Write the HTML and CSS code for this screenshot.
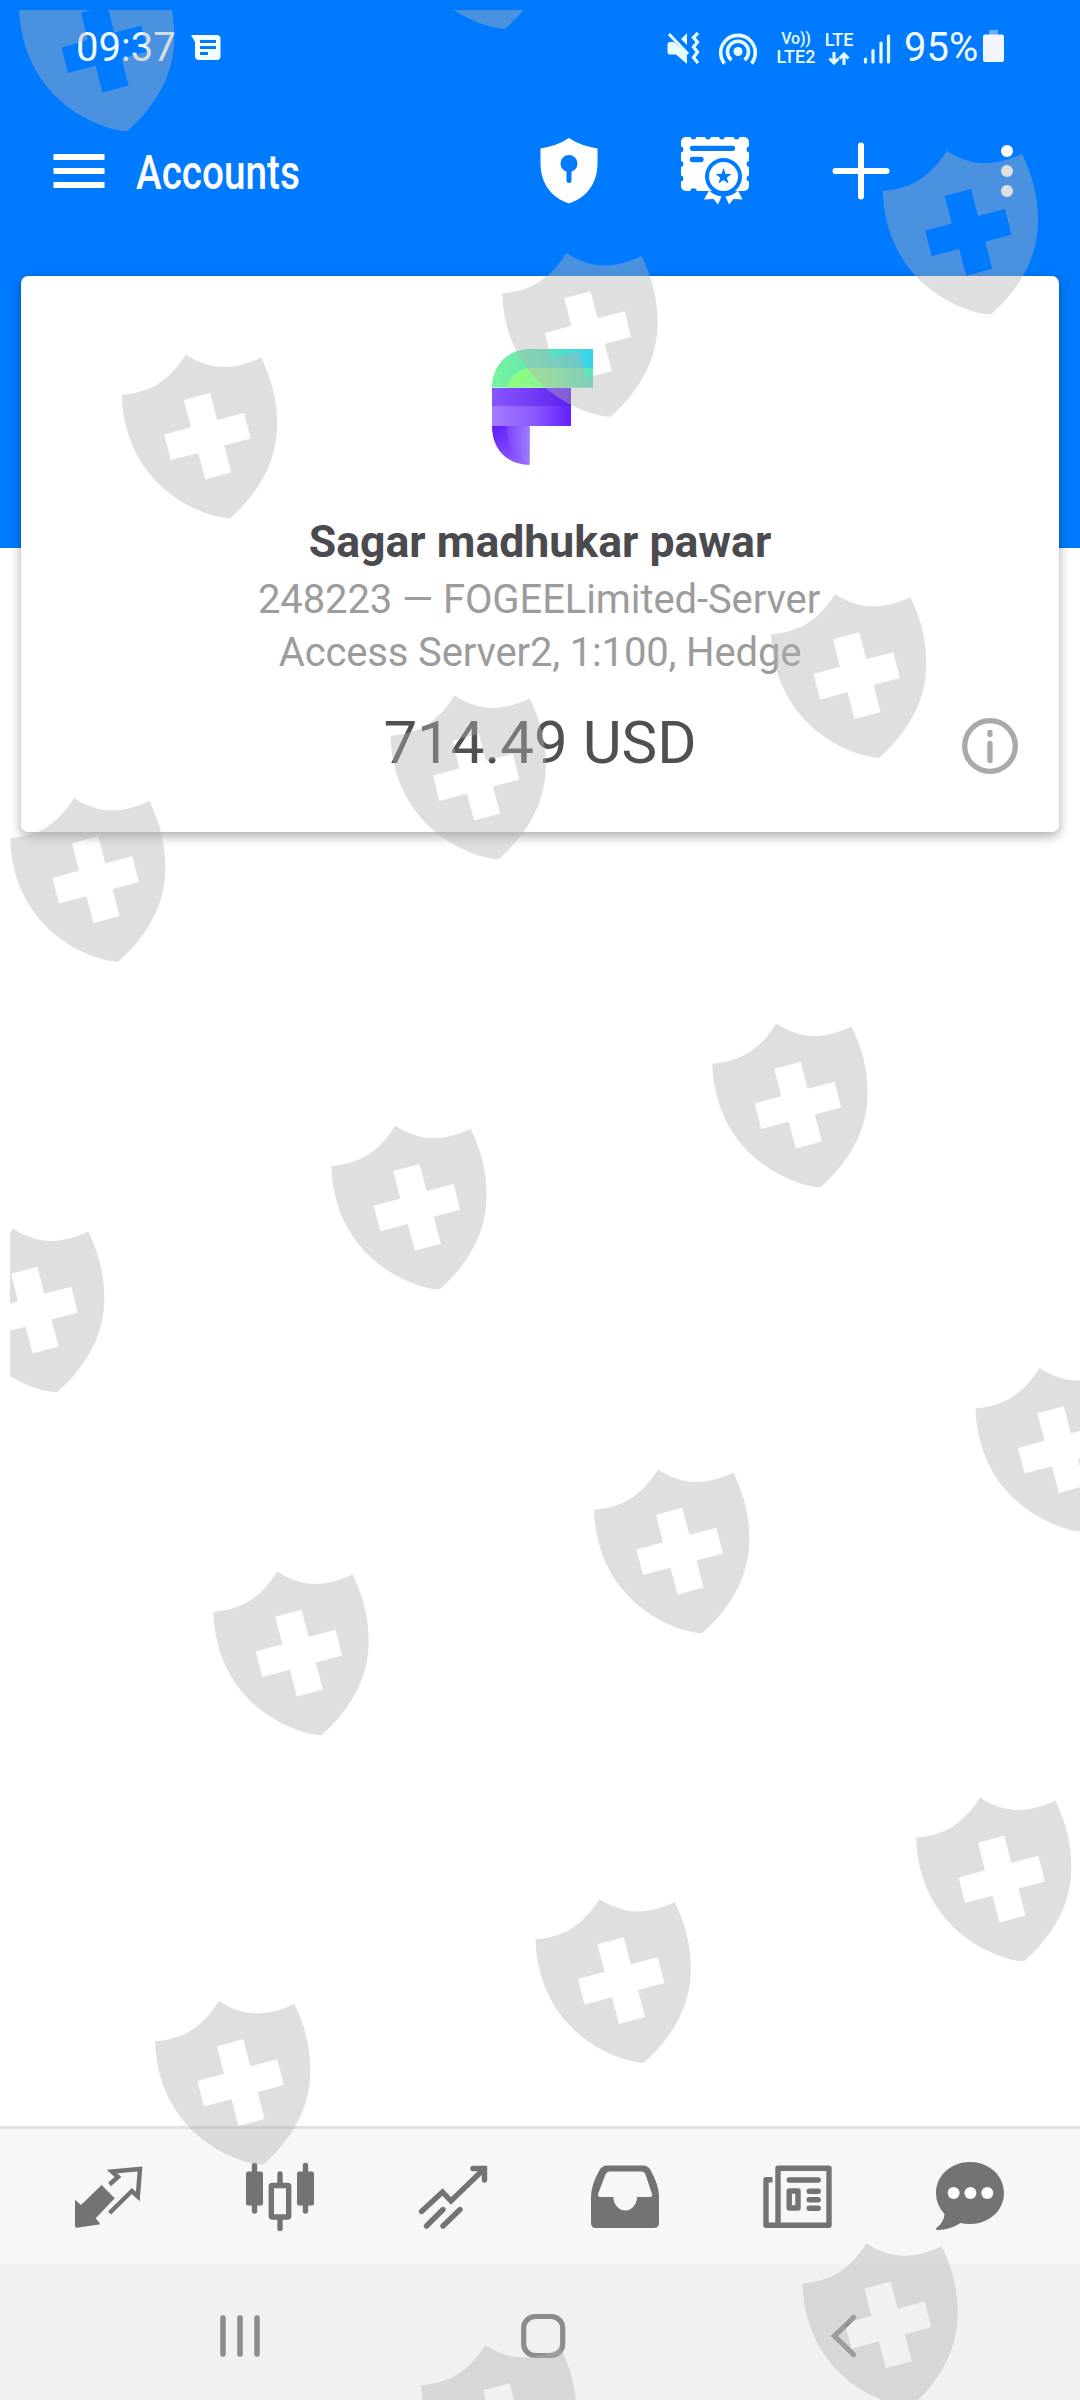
FILE: index.html
```html
<!DOCTYPE html>
<html lang="en">
<head>
<meta charset="utf-8">
<title>Accounts</title>
<link rel="stylesheet" href="styles.css">
</head>
<body>
<div class="screen">
  <header class="header">
    <div class="status">
      <span class="clock">09:37</span>
      <svg class="msg" width="30" height="26" viewBox="191 34 30 26"><path d="M191 34H217Q220.500 34 220.500 37.500V55Q220.500 59 217 59H199Q195 59 195 55V41Z" fill="#f2fdff"/><path d="M200 40.500H216M200 46.500H216M200 52.500H208" stroke="#007aff" stroke-width="2.800"/></svg>
      <div class="signals">
        <svg width="34" height="36" viewBox="666 28 34 36" fill="#e8fbff"><path d="M667.500 43Q667.500 40 670 40H674L687 52V62L676 52.500H670Q667.500 52.500 667.500 50ZM681 37L687 31V43Z"/><path d="M669 32L688 52" stroke="#e8fbff" stroke-width="3" fill="none"/><path d="M698 31L693.500 35.500L697.500 40L693.500 45L697.500 50L693.500 55.500L698 61" stroke="#e8fbff" stroke-width="3.200" fill="none"/></svg>
        <svg class="hotspot" width="40" height="36" viewBox="718 28 40 36" fill="none" stroke="#e8fbff" stroke-width="3.600"><circle cx="738" cy="49.500" r="4.500" fill="#e8fbff" stroke="none"/><path d="M731.500 58A10.500 10.500 0 1 1 744.500 58M724.500 61.500A17.300 17.300 0 1 1 751.500 61.500"/></svg>
        <div class="lte"><span class="vo">Vo))</span><span>LTE2</span></div>
        <div class="lte data"><span>LTE</span><svg width="22" height="13" viewBox="0 0 22 13" fill="none" stroke="#e8fbff" stroke-width="3"><path d="M6 0V11M1.500 6.500L6 11L10.500 6.500M16 13V2M11.500 6.500L16 2L20.500 6.500"/></svg></div>
        <svg class="bars" width="28" height="32" viewBox="863 31 28 32" stroke="#e8fbff" stroke-width="3.200" stroke-linecap="round"><path d="M865.500 58V61M873 49.500V61M881 42V61M888.500 35V61"/></svg>
        <span class="percent">95%</span>
        <svg class="battery" width="21" height="32" viewBox="983 30 21 32"><path d="M989 30H998V35H989Z" fill="#66b0ff"/><rect x="983" y="34.500" width="21" height="27.500" rx="2" fill="#f1f6ff"/></svg>
      </div>
    </div>
    <div class="toolbar">
      <svg width="52" height="34" viewBox="0 0 52 34" fill="#fff"><path d="M.5 0H51.500V6H.5ZM.5 14H51.500V20H.5ZM.5 28H51.500V34H.5Z"/></svg>
      <h1 class="title">Accounts</h1>
      <div class="actions">
        <svg width="58" height="66" viewBox="540 137 58 66"><path d="M569 137C578 143 588 146 597.500 147.500V162C597.500 183 586 197 569 202.500C552 197 540.500 183 540.500 162V147.500C550 146 560 143 569 137Z" fill="#fff"/><circle cx="569" cy="162.500" r="8.500" fill="#007aff"/><path d="M569 165V179.500" stroke="#007aff" stroke-width="5" stroke-linecap="round"/></svg>
        <svg width="70" height="70" viewBox="680 136 70 70"><rect x="681" y="137" width="68" height="54" rx="5" fill="#fff"/><g fill="#007aff"><circle cx="693.500" cy="136.500" r="2.900"/><circle cx="708" cy="136.500" r="2.900"/><circle cx="722" cy="136.500" r="2.900"/><circle cx="736.500" cy="136.500" r="2.900"/><circle cx="680.500" cy="149.500" r="2.900"/><circle cx="680.500" cy="164" r="2.900"/><circle cx="680.500" cy="178.500" r="2.900"/><circle cx="749.500" cy="149.500" r="2.900"/><circle cx="749.500" cy="164" r="2.900"/><circle cx="749.500" cy="178.500" r="2.900"/><circle cx="693.500" cy="191.500" r="3.200"/></g><path d="M692.500 148.300H732.500M692.500 159.500H701" stroke="#007aff" stroke-width="5.300" stroke-linecap="round"/><circle cx="723.500" cy="176.500" r="18.500" fill="#007aff"/><circle cx="723.500" cy="176.500" r="14.500" fill="#fff"/><path d="M723.500 168L725.600 174H731.500L726.800 177.700L728.500 183.500L723.500 180L718.500 183.500L720.200 177.700L715.500 174H721.400Z" fill="#007aff"/><path d="M709 190.500Q714 195.500 721.500 196.500L718 204.500L713.500 199L704 199.500ZM738 190.500Q733 195.500 725.500 196.500L729 204.500L733.500 199L742.500 199.500Z" fill="#fff"/></svg>
        <svg width="58" height="58" viewBox="832 142 58 58" stroke="#fff" stroke-width="6" stroke-linecap="round"><path d="M835.500 171H886.500M861 145.500V196.500"/></svg>
        <svg class="more" width="12" height="54" viewBox="0 0 12 54" fill="#fff"><circle cx="6" cy="7" r="6"/><circle cx="6" cy="27" r="6"/><circle cx="6" cy="47" r="6"/></svg>
      </div>
    </div>
  </header>

  <main class="content">
    <section class="card">
      <svg class="logo" width="102" height="116" viewBox="0 0 102 116">
        <defs>
          <linearGradient id="g1"><stop offset="0" stop-color="#78f39b"/><stop offset=".6" stop-color="#55e1c2"/><stop offset="1" stop-color="#38d2ee"/></linearGradient>
          <linearGradient id="g2"><stop offset="0" stop-color="#8efb7c"/><stop offset=".45" stop-color="#8af791"/><stop offset="1" stop-color="#5be2c4"/></linearGradient>
          <linearGradient id="p1"><stop offset="0" stop-color="#8956ff"/><stop offset="1" stop-color="#5c20ee"/></linearGradient>
          <linearGradient id="p2"><stop offset="0" stop-color="#a47cff"/><stop offset=".5" stop-color="#8d5cff"/><stop offset="1" stop-color="#631fff"/></linearGradient>
          <linearGradient id="p3" x2="1" y2="1"><stop offset="0" stop-color="#5e18fa"/><stop offset="1" stop-color="#9b70ff"/></linearGradient>
          <linearGradient id="p4"><stop offset="0" stop-color="#7c45fb"/><stop offset="1" stop-color="#a17aff"/></linearGradient>
        </defs>
        <path d="M0 38.500C0 16 16 0 38 0H101V38.500Z" fill="url(#g1)"/>
        <path d="M15 38.500C18 27 27 19 39 19H101V38.500Z" fill="url(#g2)"/>
        <path d="M0 39H79V57H0Z" fill="url(#p1)"/><path d="M0 57H79V77H0Z" fill="url(#p2)"/>
        <path d="M0 77H37.500V116C16 116 0 101 0 77Z" fill="url(#p3)"/>
        <path d="M15 77H37.500V114C24 109 15 98 15 77Z" fill="url(#p4)"/>
      </svg>
      <h2 class="name">Sagar madhukar pawar</h2>
      <p class="detail server">248223 — FOGEELimited-Server</p>
      <p class="detail access">Access Server2, 1:100, Hedge</p>
      <p class="amount">714.49 USD</p>
      <svg class="info" width="56" height="56" viewBox="0 0 56 56" fill="none" stroke="#aaa" stroke-width="5.300" stroke-linecap="round"><circle cx="28" cy="28" r="25.300"/><path d="M28 14.500V16.500M28 25.500V42.500"/></svg>
    </section>
  </main>

  <nav class="tabs">
    <svg width="72" height="72" viewBox="72 2160 72 72" fill="#737373"><path d="M75 2198.700L81 2204L101.600 2184L114.700 2197.300L95.700 2217.300L100.500 2223.300L77 2226.700Q75 2227 75 2225Z"/><path d="M109.500 2212L131.900 2190L137.800 2195.500L140 2168L112 2170.500L118 2176L109.500 2183.500" fill="none" stroke="#737373" stroke-width="4.500"/></svg>
    <svg width="72" height="72" viewBox="245 2160 72 72" fill="#737373"><rect x="247" y="2170.500" width="17" height="34" rx="2"/><rect x="298" y="2170.500" width="17" height="34" rx="2"/><path d="M255.500 2164.500V2210M306.500 2164.500V2210M281 2173V2182M281 2218V2227.500" stroke="#737373" stroke-width="5.400" stroke-linecap="round"/><rect x="272.300" y="2184.500" width="17.400" height="31.500" rx="1" fill="none" stroke="#737373" stroke-width="5.400"/></svg>
    <svg width="72" height="72" viewBox="417 2160 72 72" fill="none" stroke="#737373" stroke-width="5.400" stroke-linecap="round"><path d="M421.500 2210.500L442.500 2191L451 2200L484.500 2167.500M473 2167.500H484.500V2179M426.500 2225L443 2208.500M443 2225L460 2208.500"/></svg>
    <svg width="72" height="72" viewBox="589 2160 72 72"><path fill-rule="evenodd" d="M609 2164.500H643Q648 2164.500 650.500 2169Q659 2184 659 2196V2222Q659 2227 654 2227H596Q591 2227 591 2222V2196Q591 2184 599.500 2169Q602 2164.500 607 2164.500ZM610 2170.500Q607 2170.500 605.500 2173.500L598 2193Q597.500 2196 600.500 2196H613.400A11.800 13.500 0 0 0 637 2196H650Q653 2196 652 2193L645.500 2173.500Q644.500 2170.500 641 2170.500Z" fill="#737373"/></svg>
    <svg width="72" height="72" viewBox="761.500 2160 72 72" fill="none" stroke="#737373" stroke-width="5.400" stroke-linejoin="round"><path d="M778.500 2167.300H829.500V2224.300H778.500ZM773 2178.700H766.500V2224.300H778"/><path d="M789.700 2179H818.700M809.700 2190.300H818.700M809.700 2198.700H818.700M809.700 2207.300H818.700" stroke-linecap="round"/><path d="M789.700 2190H798.500V2207H789.700Z"/></svg>
    <svg width="72" height="72" viewBox="934 2160 72 72"><path d="M970 2161C989 2161 1004 2174.500 1004 2192S989 2223 970 2223Q965 2223 960.500 2222Q949 2229.500 937 2229Q935 2228 937 2226.500Q944 2221 944.500 2213Q936 2204 936 2192C936 2174.500 951 2161 970 2161Z" fill="#737373"/><g fill="#fff"><circle cx="953.600" cy="2192" r="6"/><circle cx="970.400" cy="2192" r="6"/><circle cx="987.300" cy="2192" r="6"/></g></svg>
  </nav>
  <footer class="system">
    <svg width="46" height="46" viewBox="217 2313 46 46" stroke="#8c8c8c" stroke-width="5.500" stroke-linecap="round"><path d="M223 2318V2354M240 2318V2354M257 2318V2354"/></svg>
    <svg width="46" height="46" viewBox="521 2313 46 46" fill="none" stroke="#8c8c8c" stroke-width="5.200"><rect x="522.500" y="2316.500" width="39" height="39" rx="11.500" transform="translate(1.200 0)"/></svg>
    <svg width="46" height="46" viewBox="824 2313 46 46" fill="none" stroke="#8c8c8c" stroke-width="5.200" stroke-linecap="round"><path d="M853.500 2317.500L834.500 2336L853.500 2354.500"/></svg>
  </footer>

  <svg class="watermark" width="1070" height="2390" viewBox="10 10 1070 2390">
    <defs><path id="shield" fill-rule="evenodd" d="M0 40.300C28 38 47 27 64 0C88 16 112 16 139.300 3C150 25 155.300 46 155.300 70C155.300 106 138 137 108.500 163.600C102 164 95 162 88 160C38 143 2 102 0 40.300ZM62 45.300L88.300 38.300L95.300 65.300L122.300 58.300L128.800 84L102.500 91L109.500 118L83.500 125L76.500 98.300L49 105.500L42.500 80L69 72.700Z"/></defs>
    <g fill="#b2b2b2" fill-opacity=".416">
      <use href="#shield" x="397" y="-135"/><use href="#shield" x="19" y="-32.600"/>
      <use href="#shield" x="882.700" y="150.700"/><use href="#shield" x="502.300" y="253"/><use href="#shield" x="121.800" y="354.600"/>
      <use href="#shield" x="771" y="594"/><use href="#shield" x="390.500" y="695.500"/><use href="#shield" x="10" y="798"/>
      <use href="#shield" x="712.300" y="1023.500"/><use href="#shield" x="331.300" y="1125.700"/><use href="#shield" x="-51" y="1228.500"/>
      <use href="#shield" x="975.500" y="1368"/><use href="#shield" x="594" y="1469.500"/><use href="#shield" x="213.300" y="1571.500"/>
      <use href="#shield" x="916" y="1797.500"/><use href="#shield" x="535.500" y="1899"/><use href="#shield" x="155" y="2001"/>
      <use href="#shield" x="802.400" y="2243.300"/><use href="#shield" x="421.300" y="2345"/>
    </g>
  </svg>
</div>
</body>
</html>
```

FILE: styles.css
```css
* { box-sizing: border-box; margin: 0; padding: 0; }
body { background: #fff; font-family: Roboto, "Liberation Sans", sans-serif; }
svg { display: block; flex: none; }

.screen { position: relative; width: 1080px; height: 2400px; overflow: hidden; display: flex; flex-direction: column; }
.header { height: 548px; flex: none; background: #007aff; color: #fff; }

.status { height: 96px; display: flex; align-items: center; padding: 0 76px 0 76px; }
.clock, .percent { font-size: 40px; line-height: 96px; color: #f0fcff; white-space: nowrap; }
.clock { width: 101px; }
.msg { margin-left: 14px; }
.signals { display: flex; align-items: center; margin-left: auto; }
.hotspot { margin-left: 18px; }
.lte { display: flex; flex-direction: column; align-items: center; width: 42px; margin-left: 17px; font-size: 18px; line-height: 18px; font-weight: 500; color: #e8fbff; }
.vo { font-size: 16px; letter-spacing: -.2px; }
.data { width: 32px; margin-left: 6px; }
.data svg { margin: 3px 0 1px; }
.bars { margin-left: 8px; }
.percent { width: 74px; margin-left: 13px; }
.battery { margin-left: 5px; margin-top: -4px; }

.toolbar { height: 150px; display: flex; align-items: center; padding: 0 67px 0 53px; }
.title { width: 164px; margin-left: 31px; padding-top: 4px; font-size: 49px; font-weight: 500; line-height: 60px; transform: scaleX(.79); transform-origin: left; white-space: nowrap; }
.actions { display: flex; align-items: center; gap: 82px; margin-left: auto; }
.more { margin-left: 29px; }

.content { flex: 1; padding: 0 21px; }
.card { position: relative; height: 556px; margin-top: -272px; padding-top: 73px; display: flex; flex-direction: column; align-items: center; background: #fff; border-radius: 7px; box-shadow: 0 4px 12px rgba(0, 0, 0, .34); text-align: center; white-space: nowrap; }
.logo { margin-left: 5px; }
.name { margin-top: 47px; font-size: 44.600px; line-height: 61px; font-weight: 700; color: #4b4b4f; }
.detail { font-size: 40px; line-height: 53px; color: #9c9c9c; }
.server { letter-spacing: -.1px; margin-left: -2px; }
.access { letter-spacing: -.15px; }
.amount { margin-top: 24px; font-size: 60px; line-height: 80px; color: #505050; }
.info { position: absolute; right: 41px; bottom: 58px; }

.tabs { height: 138px; flex: none; display: grid; grid-template-columns: repeat(6, 1fr); place-items: center; padding: 0 24px 0 22px; background: #f7f7f7; border-top: 3px solid #e0e0e0; }
.system { height: 136px; flex: none; display: flex; align-items: center; justify-content: space-between; padding: 8px 210px 0 217px; background: #f1f1f1; }

.watermark { position: absolute; left: 10px; top: 10px; overflow: hidden; pointer-events: none; }
```
